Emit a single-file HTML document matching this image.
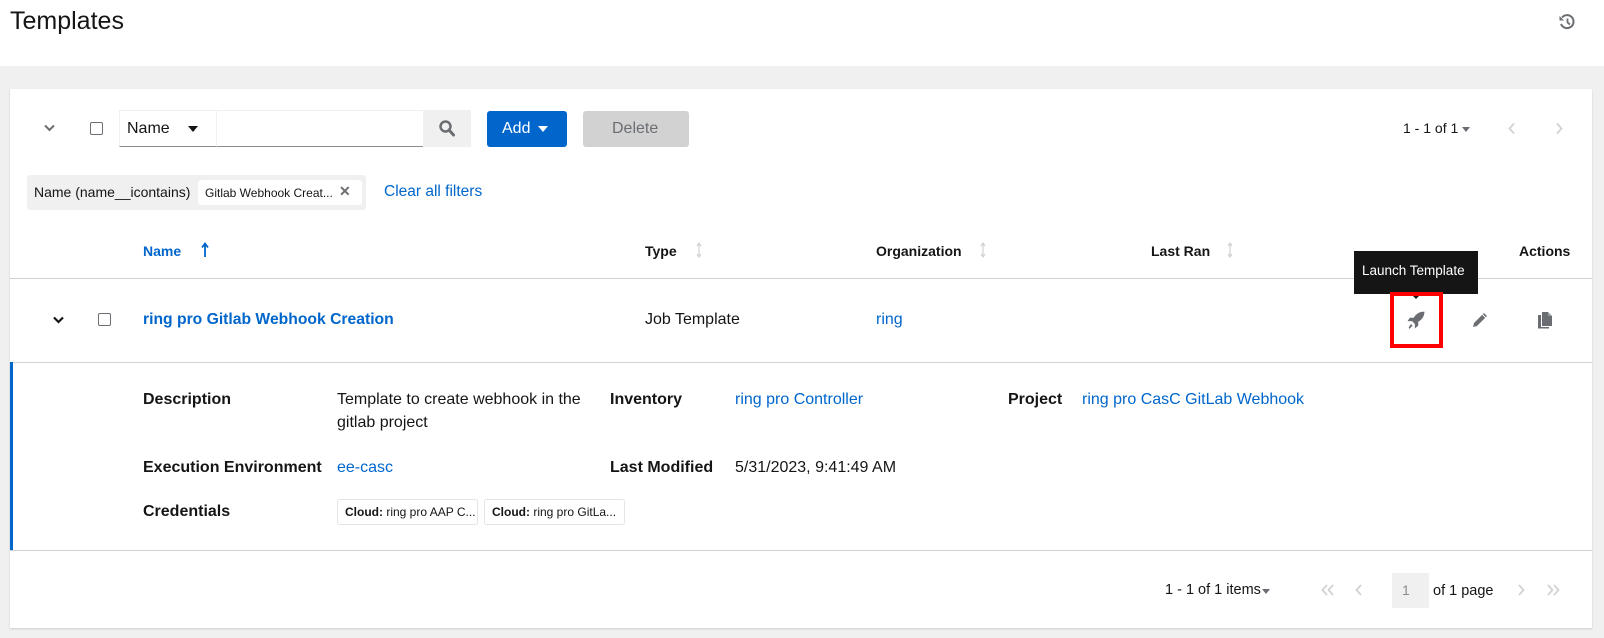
<!DOCTYPE html>
<html><head><meta charset="utf-8"><style>
*{box-sizing:border-box;margin:0;padding:0}
body{width:1604px;height:638px;background:#f0f0f0;font-family:"Liberation Sans",sans-serif;color:#151515;font-size:16px;position:relative;overflow:hidden}
.a{position:absolute;white-space:nowrap}
.blue{color:#0066cc}
.b{font-weight:bold}
.cb{position:absolute;width:13px;height:13px;border:1px solid #6a6e73;border-radius:2px;background:#fff}
.hr{position:absolute;left:10px;width:1582px;height:1px;background:#d2d2d2}
.h{font-size:14px;font-weight:bold}
svg{position:absolute}
</style></head><body>
<div class="a" style="left:0;top:0;width:1604px;height:66px;background:#fff"></div>
<div class="a" style="left:10px;top:7px;font-size:25px">Templates</div>
<svg style="left:1558px;top:13px" width="18" height="18" viewBox="0 0 18 18"><path d="M4 4.5A6.5 6.5 0 1 1 3 11" fill="none" stroke="#6a6e73" stroke-width="2"/><path d="M1.5 3v4.5H6z" fill="#6a6e73"/><path d="M9.5 5.5v4l2.5 2" fill="none" stroke="#6a6e73" stroke-width="1.8"/></svg>

<div class="a" style="left:10px;top:89px;width:1582px;height:539px;background:#fff;box-shadow:0 1px 2px rgba(0,0,0,.15)"></div>

<svg style="left:44px;top:124px" width="11" height="8" viewBox="0 0 11 8"><path d="M1 1.5l4.5 4.5 4.5-4.5" fill="none" stroke="#6a6e73" stroke-width="2"/></svg>
<div class="cb" style="left:90px;top:122px"></div>
<div class="a" style="left:119px;top:110px;width:98px;height:37px;border:1px solid #f0f0f0;border-bottom-color:#8a8d90"></div>
<div class="a" style="left:127px;top:120px;font-size:16px">Name</div>
<div class="a" style="left:188px;top:126px;width:0;height:0;border-left:5px solid transparent;border-right:5px solid transparent;border-top:6px solid #151515"></div>
<div class="a" style="left:217px;top:110px;width:206px;height:37px;border-top:1px solid #f0f0f0;border-bottom:1px solid #8a8d90"></div>
<div class="a" style="left:423px;top:110px;width:48px;height:37px;background:#f0f0f0"></div>
<svg style="left:439px;top:120px" width="16" height="17" viewBox="0 0 16 17"><circle cx="6.5" cy="6.5" r="5" fill="none" stroke="#6a6e73" stroke-width="2.5"/><path d="M10 10l4.5 5" stroke="#6a6e73" stroke-width="3" stroke-linecap="round"/></svg>
<div class="a" style="left:487px;top:111px;width:80px;height:36px;background:#0066cc;border-radius:3px"></div>
<div class="a" style="left:502px;top:120px;font-size:16px;color:#fff">Add</div>
<div class="a" style="left:538px;top:126px;border-left:5px solid transparent;border-right:5px solid transparent;border-top:6px solid #fff"></div>
<div class="a" style="left:583px;top:111px;width:106px;height:36px;background:#d2d2d2;border-radius:3px"></div>
<div class="a" style="left:612px;top:120px;font-size:16px;color:#6a6e73">Delete</div>
<div class="a" style="left:1403px;top:120px;font-size:14px">1 - 1 of 1</div>
<div class="a" style="left:1462px;top:127px;border-left:4.5px solid transparent;border-right:4.5px solid transparent;border-top:5px solid #6a6e73"></div>
<svg style="left:1508px;top:122px" width="8" height="13" viewBox="0 0 8 13"><path d="M6 1.5l-4.5 5 4.5 5" fill="none" stroke="#d2d2d2" stroke-width="1.8"/></svg>
<svg style="left:1555px;top:122px" width="8" height="13" viewBox="0 0 8 13"><path d="M2 1.5l4.5 5-4.5 5" fill="none" stroke="#d2d2d2" stroke-width="1.8"/></svg>

<div class="a" style="left:27px;top:175px;width:339px;height:35px;background:#f0f0f0;border-radius:3px"></div>
<div class="a" style="left:34px;top:184px;font-size:14px">Name (name__icontains)</div>
<div class="a" style="left:198px;top:180px;width:164px;height:25px;background:#fff;border-radius:3px"></div>
<div class="a" style="left:205px;top:186px;font-size:12px">Gitlab Webhook Creat...</div>
<div class="a b" style="left:339px;top:183px;font-size:14px;color:#6a6e73">✕</div>
<div class="a blue" style="left:384px;top:183px;font-size:15.5px">Clear all filters</div>

<div class="a h blue" style="left:143px;top:243px">Name</div>
<svg style="left:201px;top:242px" width="8" height="16" viewBox="0 0 8 16"><path d="M4 2v13M1 5.5L4 1.5l3 4" fill="none" stroke="#0066cc" stroke-width="1.8"/></svg>
<div class="a h" style="left:645px;top:243px">Type</div>
<div class="a h" style="left:876px;top:243px">Organization</div>
<div class="a h" style="left:1151px;top:243px">Last Ran</div>
<div class="a h" style="left:1519px;top:243px">Actions</div>
<svg style="left:696px;top:242px" width="6" height="16"><path d="M3 1v14M1 4l2-3 2 3M1 12l2 3 2-3" fill="none" stroke="#d2d2d2" stroke-width="1.2"/></svg>
<svg style="left:980px;top:242px" width="6" height="16"><path d="M3 1v14M1 4l2-3 2 3M1 12l2 3 2-3" fill="none" stroke="#d2d2d2" stroke-width="1.2"/></svg>
<svg style="left:1227px;top:242px" width="6" height="16"><path d="M3 1v14M1 4l2-3 2 3M1 12l2 3 2-3" fill="none" stroke="#d2d2d2" stroke-width="1.2"/></svg>
<div class="hr" style="top:278px"></div>

<svg style="left:53px;top:316px" width="11" height="8" viewBox="0 0 11 8"><path d="M1 1.5l4.5 4.5 4.5-4.5" fill="none" stroke="#151515" stroke-width="2.2"/></svg>
<div class="cb" style="left:98px;top:313px"></div>
<div class="a b blue" style="left:143px;top:311px;font-size:15.7px">ring pro Gitlab Webhook Creation</div>
<div class="a" style="left:645px;top:311px">Job Template</div>
<div class="a blue" style="left:876px;top:311px">ring</div>

<div class="a" style="left:1354px;top:251px;width:124px;height:43px;background:#151515"></div>
<div class="a" style="left:1362px;top:263px;font-size:13.5px;color:#fff">Launch Template</div>
<div class="a" style="left:1411px;top:294px;border-left:5px solid transparent;border-right:5px solid transparent;border-top:5px solid #151515"></div>
<div class="a" style="left:1390px;top:292px;width:53px;height:56px;border:4px solid #f00"></div>
<svg style="left:1407px;top:311px" width="18" height="18" viewBox="0 0 16 16"><path d="M15.5 0.5c-4.5 0-7.5 2-9.5 5.5H2.5L0.5 9h4l2.5 2.5v4l3-2.5v-3.5c3.5-2 5.5-5 5.5-9z" fill="#6a6e73"/><path d="M3.5 11.5l1.5 1.5-3 3-.5-1.5z" fill="#6a6e73"/></svg>
<svg style="left:1471px;top:311px" width="18" height="18" viewBox="0 0 18 18"><path d="M2 16l1-4L13 2l3 3L6 15z" fill="#6a6e73"/><path d="M11.5 3.5l3 3" stroke="#fff" stroke-width="1"/></svg>
<svg style="left:1537px;top:311px" width="16" height="18" viewBox="0 0 16 18"><path d="M5 1h6l4 4v10H5z" fill="#6a6e73"/><path d="M1 4h3v12h8v1.5H1z" fill="#6a6e73"/><path d="M11 1v4h4" fill="#9a9da0"/></svg>

<div class="hr" style="top:362px"></div>
<div class="a" style="left:10px;top:362px;width:3px;height:188px;background:#0066cc"></div>
<div class="a b" style="left:143px;top:391px">Description</div>
<div class="a" style="left:337px;top:391px">Template to create webhook in the</div>
<div class="a" style="left:337px;top:414px">gitlab project</div>
<div class="a b" style="left:610px;top:391px">Inventory</div>
<div class="a blue" style="left:735px;top:391px">ring pro Controller</div>
<div class="a b" style="left:1008px;top:391px">Project</div>
<div class="a blue" style="left:1082px;top:391px">ring pro CasC GitLab Webhook</div>
<div class="a b" style="left:143px;top:459px">Execution Environment</div>
<div class="a blue" style="left:337px;top:459px">ee-casc</div>
<div class="a b" style="left:610px;top:459px">Last Modified</div>
<div class="a" style="left:735px;top:459px">5/31/2023, 9:41:49 AM</div>
<div class="a b" style="left:143px;top:503px">Credentials</div>
<div class="a" style="left:337px;top:499px;width:141px;height:26px;border:1px solid #e4e4e4;border-radius:3px"></div>
<div class="a" style="left:345px;top:505px;font-size:12px"><b>Cloud:</b> ring pro AAP C...</div>
<div class="a" style="left:484px;top:499px;width:141px;height:26px;border:1px solid #e4e4e4;border-radius:3px"></div>
<div class="a" style="left:492px;top:505px;font-size:12px"><b>Cloud:</b> ring pro GitLa...</div>
<div class="hr" style="top:550px"></div>

<div class="a" style="left:1165px;top:582px;font-size:14.5px">1 - 1 of 1 items</div>
<div class="a" style="left:1262px;top:589px;border-left:4.5px solid transparent;border-right:4.5px solid transparent;border-top:5px solid #6a6e73"></div>
<svg style="left:1321px;top:584px" width="14" height="12" viewBox="0 0 14 12"><path d="M6 1L1.5 6 6 11M12 1L7.5 6 12 11" fill="none" stroke="#d2d2d2" stroke-width="1.8"/></svg>
<svg style="left:1355px;top:584px" width="8" height="12" viewBox="0 0 8 12"><path d="M6 1L1.5 6 6 11" fill="none" stroke="#d2d2d2" stroke-width="1.8"/></svg>
<div class="a" style="left:1392px;top:573px;width:37px;height:35px;background:#f0f0f0"></div>
<div class="a" style="left:1402px;top:582px;font-size:14px;color:#8a8d90">1</div>
<div class="a" style="left:1433px;top:583px;font-size:14.5px">of 1 page</div>
<svg style="left:1517px;top:584px" width="8" height="12" viewBox="0 0 8 12"><path d="M2 1l4.5 5L2 11" fill="none" stroke="#d2d2d2" stroke-width="1.8"/></svg>
<svg style="left:1546px;top:584px" width="14" height="12" viewBox="0 0 14 12"><path d="M2 1l4.5 5L2 11M8 1l4.5 5L8 11" fill="none" stroke="#d2d2d2" stroke-width="1.8"/></svg>
</body></html>
